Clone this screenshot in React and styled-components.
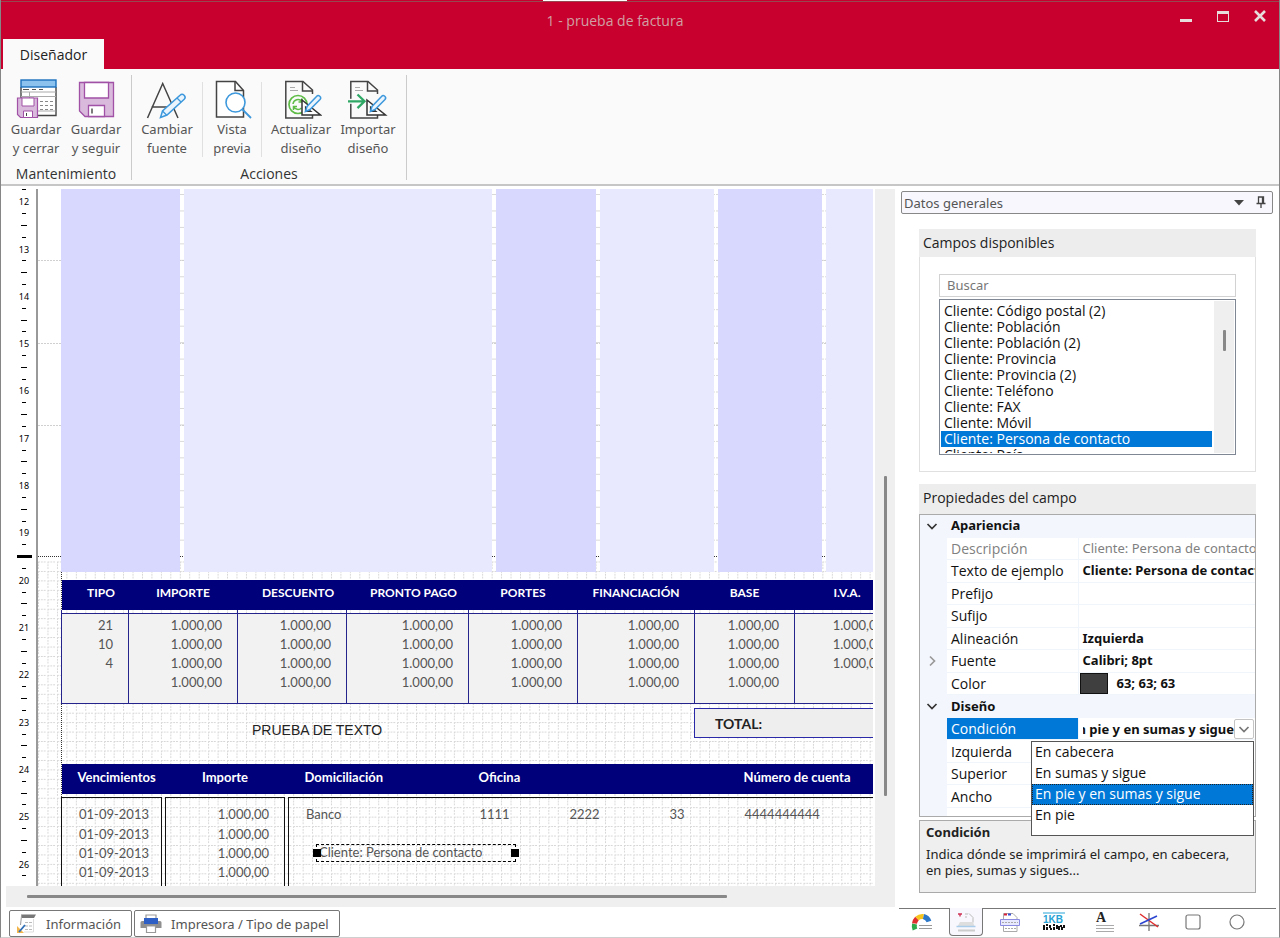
import styled, { createGlobalStyle, css } from "styled-components";

const GlobalStyle = createGlobalStyle`
  * {
    box-sizing: border-box;
  }

  body {
    margin: 0;
    background: #fff;
    font-family: "Noto Sans", "Open Sans", sans-serif;
    font-size: 13px;
    color: #222;
  }

  button,
  input,
  select {
    font: inherit;
    color: inherit;
  }

  button {
    padding: 0;
    border: none;
    background: none;
  }
`;

const panelText = css`
  font-family: "Open Sans", "Noto Sans", sans-serif;
  font-size: 14px;
`;

const Window = styled.div`
  display: flex;
  flex-direction: column;
  height: 100vh;
  overflow: hidden;
  border: 1px solid #868686;
  border-top: none;
  border-bottom-color: #cfcfcf;
`;

/* ---------- title bar ---------- */

const TopStrip = styled.div`
  display: flex;
  justify-content: center;
  flex: none;
  height: 2px;
  padding-right: 110px;
  background: #c8002d;
  border-bottom: 1px solid #96474f;
`;

const StripMark = styled.span`
  width: 84px;
  background: #fff;
`;

const TitleBar = styled.header`
  display: grid;
  grid-template-columns: 1fr auto 1fr;
  flex: none;
  height: 37px;
  background: #c8002d;
`;

const Title = styled.h1`
  grid-column: 2;
  margin: 0;
  padding-right: 50px;
  ${panelText}
  font-weight: 400;
  line-height: 37px;
  color: #d0a0a4;
`;

const WindowButtons = styled.div`
  display: flex;
  justify-content: flex-end;
  gap: 13px;
  padding: 3px 7px 0 0;
`;

const WindowButton = styled.button`
  width: 24px;
  height: 24px;

  svg {
    display: block;
  }
`;

const TabStrip = styled.nav`
  display: flex;
  flex: none;
  height: 30px;
  padding-left: 2px;
  background: #c8002d;
`;

const RibbonTab = styled.button`
  width: 101px;
  padding-top: 1px;
  background: #fafafa;
  ${panelText}
  color: #222;
`;

/* ---------- ribbon ---------- */

const Ribbon = styled.div`
  display: flex;
  flex: none;
  height: 117px;
  padding: 6px 0 4px;
  background: #fafafa;
  border-bottom: 2px solid #c6c6c6;
`;

const RibbonGroup = styled.section`
  display: flex;
  flex-direction: column;
  justify-content: space-between;
  padding: 0 5px;
  border-right: 1px solid #cbcbcb;
`;

const RibbonItems = styled.div`
  display: flex;
`;

const RibbonButton = styled.button`
  display: flex;
  flex-direction: column;
  align-items: center;
  width: ${(props) => props.$width};
  padding-top: 3px;
  line-height: 19px;
  color: #555;

  svg {
    flex: none;
  }
`;

const RibbonDivider = styled.span`
  width: 1px;
  height: 75px;
  margin: 7px 5px 0;
  background: #e0e0e0;
`;

const GroupName = styled.h2`
  margin: 0;
  ${panelText}
  font-weight: 400;
  line-height: 12px;
  text-align: center;
  color: #333;
`;

/* ---------- workspace ---------- */

const Workspace = styled.div`
  display: flex;
  flex: 1;
  min-height: 0;
  padding-top: 3px;
`;

const DesignArea = styled.main`
  display: flex;
  flex-direction: column;
  flex: 1;
  min-width: 0;
`;

const CanvasRow = styled.div`
  display: flex;
  flex: 1;
  min-height: 0;
`;

const Ruler = styled.ol`
  display: flex;
  flex-direction: column;
  flex: none;
  width: 35px;
  height: 698px;
  margin: -5px 0 0;
  padding: 0 0 0 11px;
  list-style: none;
`;

const RulerMark = styled.li`
  display: flex;
  align-items: center;
  justify-content: center;
  flex: 1;
  min-height: 0;
  width: 24px;
  font-size: 9px;
  line-height: 9px;
  color: #000;

  ${(props) =>
    props.$tick &&
    css`
      &::before {
        content: "";
        width: ${{ small: "4px", medium: "6px", page: "15px" }[props.$tick]};
        height: ${props.$tick === "page" ? "3px" : "1px"};
        background: #000;
      }
    `}
`;

const Paper = styled.div`
  position: relative;
  flex: 1;
  min-width: 0;
  overflow: hidden;
  padding-left: 23px;
  border-left: 2px solid #999;
`;

const GridLines = styled.svg`
  position: absolute;
  inset: 0;
  z-index: -1;
  width: 100%;
  height: 100%;
`;

const Bands = styled.div`
  display: flex;
  gap: 4px;
  height: 383px;
`;

const Band = styled.div`
  flex: ${(props) => (props.$width ? "none" : "1")};
  width: ${(props) => props.$width};
  background: ${(props) => (props.$dark ? "#d8d8ff" : "#e8e8ff")};
`;

const ReportTable = styled.table`
  table-layout: fixed;
  width: 838px;
  border-collapse: collapse;
  font-family: Lato, "Open Sans", sans-serif;
  font-size: 13px;
  line-height: 19px;
  color: #555;
`;

const HeadCell = styled.th`
  height: 30px;
  padding: 0 0 4px ${(props) => props.$indent || "0"};
  background: #00007b;
  color: #fff;
  font-size: ${(props) => (props.$large ? "13px" : "12px")};
  line-height: 16px;
  white-space: nowrap;
  text-align: ${(props) => props.$align || "center"};
`;

const TaxTable = styled(ReportTable)`
  margin-top: 8px;

  td {
    padding: 0 15px 0 0;
    border: 0 solid #24248c;
    border-width: 0 1px;
    background: #f2f2f2;
    text-align: right;
  }

  tbody tr:first-child td {
    height: 3px;
    background: transparent;
  }

  tbody tr:nth-child(2) td {
    height: 21px;
    padding-top: 2px;
    border-top-width: 1px;
  }

  tbody tr:last-child td {
    height: 30px;
    padding-bottom: 11px;
    border-bottom-width: 1px;
  }
`;

const TotalsRow = styled.div`
  display: flex;
  align-items: center;
  height: 30px;
  margin: 4px 0 26px;
`;

const FreeText = styled.p`
  flex: none;
  width: 633px;
  margin: 0;
  padding: 14px 0 0 191px;
  font-family: "Liberation Sans", sans-serif;
  font-size: 14px;
  line-height: 16px;
  color: #222;
`;

const TotalBox = styled.div`
  flex: 1;
  height: 30px;
  padding-left: 20px;
  border: 1px solid #2a2aa8;
  border-right: none;
  background: #eee;
  font-family: Lato, "Open Sans", sans-serif;
  font-size: 14px;
  font-weight: 700;
  line-height: 30px;
`;

const DueTable = styled(ReportTable)`
  td {
    height: 19px;
    padding: 0 0 0 17px;
    text-align: left;
    vertical-align: top;
    white-space: nowrap;
  }

  tbody tr:first-child td {
    height: 4px;
  }

  tbody tr:nth-child(2) td {
    height: 27px;
    padding-top: 7px;
  }

  tbody tr:last-child td {
    height: 40px;
  }
`;

const BoxCell = styled.td`
  border-left: 1px solid #111;
  border-right: ${(props) => (props.$open ? "none" : "1px solid #111")};

  ${(props) =>
    props.$amount &&
    css`
      && {
        padding-left: 0;
        padding-right: 15px;
        text-align: right;
      }
    `}
`;

const DueRow = styled.tr`
  ${(props) =>
    props.$first &&
    css`
      td:not(:empty),
      td[data-inner] {
        border-top: 1px solid #111;
      }
    `}
`;

/* field placed freely on the sheet */
const PlacedField = styled.div`
  position: absolute;
  left: 278px;
  top: 655px;
  display: flex;
  align-items: center;
  width: 200px;
  height: 18px;
  padding: 0 0 2px 2px;
  border: 1px dashed #000;
  font-family: Lato, "Open Sans", sans-serif;
  font-size: 13px;
  line-height: 16px;
  color: #555;
`;

const Handle = styled.span`
  position: absolute;
  ${(props) => props.$side}: -4px;
  top: 4px;
  width: 8px;
  height: 8px;
  background: #000;
`;

const ScrollTrack = styled.div`
  display: flex;
  flex: none;
  align-items: center;
  flex-direction: ${(props) => (props.$vertical ? "column" : "row")};
  width: ${(props) => (props.$vertical ? "20px" : "auto")};
  height: ${(props) => (props.$vertical ? "auto" : "21px")};
  margin-left: ${(props) => (props.$vertical ? "2px" : "5px")};
  background: #efefef;

  &::before {
    content: "";
    flex: ${(props) => props.$before};
  }

  &::after {
    content: "";
    flex: ${(props) => props.$after};
  }
`;

const ScrollThumb = styled.span`
  flex: ${(props) => props.$size};
  width: ${(props) => (props.$vertical ? "3px" : "auto")};
  height: ${(props) => (props.$vertical ? "auto" : "3px")};
  border-radius: 1px;
  background: #888;
`;

const BottomTabs = styled.nav`
  display: flex;
  flex: none;
  gap: 2px;
  height: 30px;
  padding: 3px 0 0 8px;
`;

const BottomTab = styled.button`
  display: flex;
  align-items: center;
  gap: 9px;
  height: 27px;
  padding: 0 10px 0 5px;
  border: 1px solid #777;
  border-radius: 2px;
  background: #fff;
  color: #555;
`;

/* ---------- side panel ---------- */

const Side = styled.aside`
  display: flex;
  flex-direction: column;
  flex: none;
  width: 384px;
  padding: 2px 3px 0 4px;
`;

const SideHeader = styled.div`
  display: flex;
  align-items: center;
  height: 23px;
  margin: 0 3px 15px 2px;
  padding-left: 2px;
  border: 1px solid #888;
  border-radius: 2px;
  background: #f7f7fd;
  color: #555;

  h2 {
    flex: 1;
    margin: 0;
    font-size: 13px;
    font-weight: 400;
    line-height: 20px;
  }
`;

const SideButton = styled.button`
  display: flex;
  align-items: center;
  justify-content: center;
  width: 22px;
  height: 20px;
`;

const Card = styled.section`
  margin: 0 20px ${(props) => props.$gap || "0"} 20px;
`;

const CardTitle = styled.h3`
  margin: 0;
  height: ${(props) => props.$height};
  padding-left: 4px;
  background: #ededed;
  ${panelText}
  font-weight: 400;
  line-height: 28px;
`;

const CardBody = styled.div`
  padding: 17px 19px 16px;
  border: 1px solid #e0e0e0;
  border-top: none;
`;

const SearchInput = styled.input`
  display: block;
  width: 100%;
  height: 23px;
  margin-bottom: 2px;
  padding: 0 7px 2px;
  border: 1px solid #d2d2d2;
  outline: none;
  background: #fff;

  &::placeholder {
    color: #777;
    opacity: 1;
  }
`;

const FieldBox = styled.div`
  display: flex;
  height: 156px;
  padding: 1px;
  border: 1px solid #7f8794;
`;

const FieldList = styled.ul`
  flex: 1;
  margin: 0;
  padding: 2px 0 0;
  overflow: hidden;
  list-style: none;
  ${panelText}
`;

const FieldOption = styled.li`
  height: 16px;
  padding-left: 3px;
  line-height: 16px;
  color: ${(props) => (props.$selected ? "#fff" : "#111")};
  background: ${(props) => (props.$selected ? "#0078d7" : "none")};
`;

const PropertyBox = styled.div`
  height: 303px;
  border: 1px solid #aaa;
  background: linear-gradient(90deg, #f3f6fc 27px, #fff 27px);
`;

const PropertyTable = styled.table`
  table-layout: fixed;
  width: 100%;
  height: 293px;
  border-collapse: collapse;
  font-size: 13px;
  line-height: 21px;
  color: #111;
`;

const Gutter = styled.td`
  padding: 0;
  background: #f3f6fc;
  text-align: center;

  svg {
    display: block;
    margin: 0 auto 0 6px;
  }
`;

const GroupCell = styled.th`
  padding: 0 0 0 4px;
  background: #f3f6fc;
  border-bottom: 1px solid #f3f6fc;
  text-align: left;
`;

const NameCell = styled.th`
  padding: 0 0 0 4px;
  border-bottom: 1px solid #f0f4fb;
  ${panelText}
  font-weight: 400;
  text-align: left;
  white-space: nowrap;
  color: ${(props) => (props.$active ? "#fff" : props.$muted ? "#808080" : "#111")};
  background: ${(props) => (props.$active ? "#0078d7" : "none")};
`;

const ValueCell = styled.td`
  padding: 0 0 0 4px;
  border-left: 1px solid #f0f4fb;
  border-bottom: 1px solid #f0f4fb;
  overflow: ${(props) => (props.$open ? "visible" : "hidden")};
  font-weight: ${(props) => (props.$muted ? 400 : 700)};
  white-space: nowrap;
  color: ${(props) => (props.$muted ? "#808080" : "#111")};
`;

const ColorValue = styled.span`
  display: flex;
  align-items: center;
  gap: 9px;
  margin-left: -3px;

  &::before {
    content: "";
    width: 26px;
    height: 19px;
    border: 1px solid #111;
    background: #3f3f3f;
  }
`;

const Combo = styled.div`
  position: relative;
  display: flex;
  align-items: center;
  height: 21px;
`;

const ComboSelect = styled.select`
  flex: 1;
  min-width: 0;
  height: 20px;
  padding: 0;
  border: none;
  outline: none;
  appearance: none;
  background: none;
  direction: rtl;
`;

const ComboArrow = styled.button`
  display: flex;
  align-items: center;
  justify-content: center;
  flex: none;
  width: 20px;
  height: 20px;
  margin-right: 1px;
  border: 1px solid #c4c4c4;
  border-radius: 2px;
  background: #fff;
`;

const ComboMenu = styled.ul`
  position: absolute;
  z-index: 2;
  top: 100%;
  right: 1px;
  width: 223px;
  height: 95px;
  margin: 2px 0 0;
  padding: 0;
  border: 1px solid #555;
  background: #fff;
  ${panelText}
  font-weight: 400;
  list-style: none;
`;

const ComboOption = styled.li`
  height: 21px;
  padding-left: 3px;
  line-height: 20px;
  color: ${(props) => (props.$selected ? "#fff" : "#111")};
  background: ${(props) => (props.$selected ? "#0078d7" : "none")};
  outline: ${(props) => (props.$selected ? "1px dotted #222" : "none")};
  outline-offset: -1px;
`;

const HelpBox = styled.section`
  height: 73px;
  margin: 3px 20px 0 20px;
  padding: 2px 6px;
  border: 1px solid #aaa;
  background: #efefef;

  h4,
  p {
    margin: 0;
    font-size: 13px;
    line-height: 16px;
  }

  h4 {
    margin-bottom: 5px;
    line-height: 18px;
  }

  p {
    padding-right: 10px;
  }
`;

const ToolTabs = styled.nav`
  display: flex;
  gap: 10px;
  height: 29px;
  margin-top: auto;
  padding-left: 6px;
  border-top: 1px solid #777;
`;

const ToolTab = styled.button`
  display: flex;
  align-items: center;
  justify-content: center;
  width: 34px;
  height: 28px;
  margin: -1px 0 0 ${(props) => props.$indent || "0"};

  ${(props) =>
    props.$active &&
    css`
      border: 1px solid #777;
      border-top: none;
      border-radius: 0 0 4px 4px;
      background: #f7f7fd;
    `}
`;

/* ---------- icons ---------- */

const RibbonSvg = ({ children }) => (
  <svg width="42" height="42" viewBox="0 0 42 42" fill="none" aria-hidden="true">
    {children}
  </svg>
);

const SaveCloseIcon = () => (
  <RibbonSvg>
    <path d="M6 9V37.5H41V9" fill="#fff" stroke="#444" strokeWidth="1.4" />
    <path d="M6 14h35M6 18.5h35M14.5 14v10M14.5 33h26" stroke="#aaa" />
    <path d="M8 11.5h6M17 11.5h4M24 11.5h4" stroke="#555" />
    <path d="M25 23.5h14M25 27.5h14M25 31.5h14" stroke="#888" strokeDasharray="3 2" />
    <rect x="6" y="2" width="35" height="7" fill="#8cc3ee" stroke="#1c70bd" strokeWidth="1.4" />
    <path d="M2.5 20h20v19.5h-17l-3-3z" fill="#d9b9dc" stroke="#a152a6" strokeWidth="1.2" />
    <path d="M7 20h12v8H7z" fill="#fff" stroke="#a152a6" />
    <path d="M8.5 33h9v6.5h-9z" fill="#fff" stroke="#a152a6" />
    <path d="M11.5 35v3" stroke="#444" />
  </RibbonSvg>
);

const SaveIcon = () => (
  <RibbonSvg>
    <path d="M4.5 4.5h34v34H10l-5.5-5.5z" fill="#d9b9dc" stroke="#a152a6" strokeWidth="1.3" />
    <path d="M9.5 4.5h24V20h-24z" fill="#fff" stroke="#a152a6" strokeWidth="1.3" />
    <path d="M13.5 27.5h16v11h-16z" fill="#fff" stroke="#a152a6" strokeWidth="1.3" />
    <path d="M17 30.5v5" stroke="#444" strokeWidth="1.4" />
  </RibbonSvg>
);

const FontIcon = () => (
  <RibbonSvg>
    <path d="M1.5 40L16.7 5.5 32 40M5.5 29H27" stroke="#444" strokeWidth="1.5" />
    <path
      d="M14.5 39.5l2-6.5L34 17.3a2.8 2.8 0 0 1 4.2 4L21 37z"
      fill="#e9f4fd"
      stroke="#3d98dc"
      strokeWidth="1.5"
    />
    <path d="M31 20l4 4M16.5 33l4 4" stroke="#3d98dc" strokeWidth="1.3" />
  </RibbonSvg>
);

const PreviewIcon = () => (
  <RibbonSvg>
    <path d="M5.5 3.5h19l8 9V39h-27z" fill="#fff" stroke="#444" strokeWidth="1.5" />
    <path d="M24 3.5v9h8.5" stroke="#444" strokeWidth="1.5" />
    <circle cx="24.5" cy="24.5" r="9.5" fill="#fff" stroke="#3d98dc" strokeWidth="1.6" />
    <path d="M31.5 31.5L40 40" stroke="#3d98dc" strokeWidth="1.8" />
  </RibbonSvg>
);

const SheetTools = () => (
  <>
    <path d="M32.5 16v-4l-9.5-8.5H5.8V40h26.7v-3" stroke="#444" strokeWidth="1.5" />
    <path d="M22.5 3.5V13h9.5" stroke="#444" strokeWidth="1.5" />
    <path d="M10 9.5h5M10 12.5h8" stroke="#aaa" />
  </>
);

const RulerPencil = () => (
  <>
    <path d="M22 22v15h18.5z" fill="#fff" stroke="#333" strokeWidth="1.5" />
    <path d="M25.5 29v4.5H31z" stroke="#333" strokeWidth="1.2" />
    <path
      d="M25.5 33.5l1.5-5 9.5-10a2.3 2.3 0 0 1 3.5 3l-10 10z"
      fill="#e9f4fd"
      stroke="#3d98dc"
      strokeWidth="1.5"
    />
  </>
);

const RefreshIcon = () => (
  <RibbonSvg>
    <SheetTools />
    <circle cx="18" cy="26.5" r="9" stroke="#5dbb46" strokeWidth="1.7" />
    <path
      d="M13 26a5 5 0 0 1 9-2.5M22 20.5V24h-3.5M13.5 28.5a5 5 0 0 0 8 1.5M13.5 32v-3.5H17"
      stroke="#5dbb46"
      strokeWidth="1.5"
    />
    <RulerPencil />
  </RibbonSvg>
);

const ImportIcon = () => (
  <RibbonSvg>
    <g transform="translate(-2 0)">
      <SheetTools />
      <path d="M3 23.3h16" stroke="#fafafa" strokeWidth="5" />
      <path d="M3 23.3h16M12.5 16.5l7 6.8-7 6.8" stroke="#2fa866" strokeWidth="2.3" />
      <RulerPencil />
    </g>
  </RibbonSvg>
);

const Chevron = ({ right, color = "#333", size = 12 }) => (
  <svg width={size} height={size} viewBox="0 0 12 12" fill="none" aria-hidden="true">
    <path d={right ? "M4 1.5L8.5 6 4 10.5" : "M1.5 4L6 8.5 10.5 4"} stroke={color} strokeWidth="1.7" />
  </svg>
);

const InfoIcon = () => (
  <svg width="22" height="22" viewBox="0 0 22 22" fill="none" aria-hidden="true">
    <path d="M6 1.5h15l-2 3.5H7z" fill="#777" />
    <path d="M6.5 3l-1 9" stroke="#999" />
    <path d="M18.5 6v13H9" stroke="#ddd" />
    <path d="M10 9.5h7M10 13h7M10 16.5h7" stroke="#bbb" strokeDasharray="3 1" />
    <path d="M2 13v7h7z" fill="#f3b64c" />
    <path d="M4 19l6-7" stroke="#2f6fb5" strokeWidth="1.8" />
  </svg>
);

const PrinterIcon = () => (
  <svg width="22" height="22" viewBox="0 0 22 22" fill="none" aria-hidden="true">
    <path d="M6 5V2h10v3" stroke="#999" strokeWidth="1.2" />
    <path d="M2 8h18a1.5 1.5 0 0 1 1.5 1.5V15H.5V9.500A1.5 1.5 0 0 1 2 8z" fill="#8f8f8f" />
    <path d="M4 5h14v6H4z" fill="#2d5fc4" />
    <path d="M6.5 13h9v6.5h-9z" fill="#fff" stroke="#999" strokeWidth="1.2" />
  </svg>
);

const PaletteIcon = () => (
  <svg width="22" height="20" viewBox="0 0 22 20" fill="none" aria-hidden="true">
    <path d="M4 17.5a9 9 0 0 1-.5-5.5" stroke="#2fa84c" strokeWidth="5" />
    <path d="M3.5 11.5a9 9 0 0 1 2.5-5" stroke="#e02d2d" strokeWidth="5" />
    <path d="M6 6.5a8 8 0 0 1 6.5-2" stroke="#f7c51e" strokeWidth="5" />
    <path d="M12.5 4.5a8 8 0 0 1 5.5 5" stroke="#2d78c8" strokeWidth="5" />
    <path d="M8 13.5h13M8 16.5h13" stroke="#999" />
  </svg>
);

const PageFieldIcon = () => (
  <svg width="22" height="22" viewBox="0 0 22 22" fill="none" aria-hidden="true">
    <path d="M3 3h4M5 2.5v3" stroke="#cf3355" strokeWidth="1.4" />
    <path d="M10 3h3M10 6h2M14 2.5l4 4v5" stroke="#bbb" />
    <path d="M5 11h13l1.5 4.5h-17z" fill="#dedede" />
    <path d="M1.5 15.5h19" stroke="#a9cdea" strokeWidth="1.5" />
    <path d="M3 19.5h17" stroke="#ccc" strokeWidth="2" />
  </svg>
);

const PageBandIcon = () => (
  <svg width="22" height="22" viewBox="0 0 22 22" fill="none" aria-hidden="true">
    <path d="M4.5 20.5v-18H14l4 4v14z" fill="#fff" stroke="#aaa" />
    <path d="M5 3.5h3" stroke="#d8223c" strokeWidth="2" />
    <path d="M9 3.5h3" stroke="#3a4fd0" strokeWidth="2" />
    <path d="M1.5 8.5h19v6h-19z" fill="#e8e8ff" stroke="#8a8ae0" />
    <path d="M3 11.5h16M6 17.5h11" stroke="#aaa" strokeDasharray="2 1" />
  </svg>
);

const BarcodeIcon = () => (
  <svg width="22" height="20" viewBox="0 0 22 20" fill="none" aria-hidden="true">
    <path d="M0 1h22" stroke="#29a3d5" />
    <text x="0" y="11" fontFamily="Liberation Sans, sans-serif" fontSize="10" fontWeight="700" fill="#29a3d5">
      1KB
    </text>
    <path
      d="M1 13v5M3 13h2M4 15v3M7 13v3M8 16v2M10 13h2M11 15v3M14 13v2M13 16h2M16 14v4M18 13v2M19 15v3M21 13v3"
      stroke="#111"
      strokeWidth="2"
    />
  </svg>
);

const LabelIcon = () => (
  <svg width="20" height="22" viewBox="0 0 20 22" fill="none" aria-hidden="true">
    <text x="1" y="11" fontFamily="Liberation Serif, serif" fontSize="14" fontWeight="700" fill="#222">
      A
    </text>
    <path d="M1 14.5h18M1 17.5h18M1 20.5h18" stroke="#aaa" />
  </svg>
);

const LinesIcon = () => (
  <svg width="22" height="20" viewBox="0 0 22 20" fill="none" aria-hidden="true">
    <path d="M11 1v18M1 13.5h20" stroke="#777" strokeWidth="1.3" />
    <path d="M2 2l18 13" stroke="#e02d2d" strokeWidth="1.5" />
    <path d="M2 12l17-8" stroke="#2d46d0" strokeWidth="1.5" />
  </svg>
);

const ShapeIcon = ({ round }) => (
  <svg width="16" height="16" viewBox="0 0 16 16" fill="none" aria-hidden="true">
    <rect x="1" y="1" width="14" height="14" rx={round ? 7 : 2} stroke="#777" strokeWidth="1.2" />
  </svg>
);

/* ---------- data ---------- */

const rulerMarks = [
  { tick: "small" },
  ...Array.from({ length: 15 }, (_, i) => i + 12).flatMap((unit) => [
    { label: unit },
    { tick: "small" },
    { tick: unit === 19 ? "page" : "medium" },
    { tick: "small" },
  ]),
].slice(0, 59);

const bands = [
  { width: "119px", dark: true },
  { width: "308px" },
  { width: "100px", dark: true },
  { width: "114px" },
  { width: "104px", dark: true },
  {},
];

const taxColumns = [
  { name: "TIPO", width: 67, indent: "12px" },
  { name: "IMPORTE", width: 109 },
  { name: "DESCUENTO", width: 109, indent: "12px" },
  { name: "PRONTO PAGO", width: 122, indent: "12px" },
  { name: "PORTES", width: 109 },
  { name: "FINANCIACIÓN", width: 117 },
  { name: "BASE", width: 100 },
  { name: "I.V.A.", width: 105 },
];

const amount = "1.000,00";
const taxRows = [
  ["21", ...Array(7).fill(amount)],
  ["10", ...Array(7).fill(amount)],
  ["4", ...Array(7).fill(amount)],
  ["", ...Array(6).fill(amount), ""],
];

const dueRows = [["Banco", "1111", "2222", "33", "4444444444"], [], [], []];

const fields = [
  "Código postal (2)",
  "Población",
  "Población (2)",
  "Provincia",
  "Provincia (2)",
  "Teléfono",
  "FAX",
  "Móvil",
  "Persona de contacto",
  "País",
];

const conditions = ["En cabecera", "En sumas y sigue", "En pie y en sumas y sigue", "En pie"];

const properties = [
  { group: "Apariencia" },
  { name: "Descripción", value: "Cliente: Persona de contacto", muted: true },
  { name: "Texto de ejemplo", value: "Cliente: Persona de contacto" },
  { name: "Prefijo" },
  { name: "Sufijo" },
  { name: "Alineación", value: "Izquierda" },
  { name: "Fuente", value: "Calibri; 8pt", expandable: true },
  { name: "Color", value: <ColorValue>63; 63; 63</ColorValue> },
  { group: "Diseño" },
  { name: "Condición", active: true },
  { name: "Izquierda" },
  { name: "Superior" },
  { name: "Ancho" },
];

/* ---------- parts ---------- */

const SheetGrid = () => (
  <GridLines aria-hidden="true" shapeRendering="crispEdges">
    <defs>
      <pattern id="cell" width="9.45" height="9.45" x="9.5" y="372.5" patternUnits="userSpaceOnUse">
        <path d="M0 .5h9.45M.5 0v9.45" stroke="#d6d6d6" strokeDasharray="2 1" />
      </pattern>
      <pattern id="dots" width="8" height="16.46" y="5" patternUnits="userSpaceOnUse">
        <path d="M0 .5h8" stroke="#d8d8d8" strokeDasharray="2 1" />
      </pattern>
    </defs>
    <rect x="23" y="0" width="100%" height="367" fill="url(#dots)" />
    <path d="M0 71.5h2000M0 154.5h2000M0 236.5h2000" stroke="#d0d0d0" strokeDasharray="2 1" />
    <rect y="372" width="100%" height="100%" fill="url(#cell)" />
    <path d="M0 367.5h2000M23.5 383v2000" stroke="#333" strokeDasharray="1 1" />
  </GridLines>
);

const TaxSummary = () => (
  <TaxTable>
    <colgroup>
      {taxColumns.map((col) => (
        <col key={col.name} width={col.width} />
      ))}
    </colgroup>
    <thead>
      <tr>
        {taxColumns.map((col) => (
          <HeadCell key={col.name} $indent={col.indent}>
            {col.name}
          </HeadCell>
        ))}
      </tr>
    </thead>
    <tbody>
      <tr>
        {taxColumns.map((col) => (
          <td key={col.name} />
        ))}
      </tr>
      {taxRows.map((row, i) => (
        <tr key={i}>
          {row.map((value, j) => (
            <td key={j}>{value}</td>
          ))}
        </tr>
      ))}
    </tbody>
  </TaxTable>
);

const DueDates = () => (
  <DueTable>
    <colgroup>
      {[100, 4, 119, 4, 174, 90, 100, 75, 172].map((width, i) => (
        <col key={i} width={width} />
      ))}
    </colgroup>
    <thead>
      <tr>
        <HeadCell $large $align="left" $indent="16px">
          Vencimientos
        </HeadCell>
        <HeadCell $large colSpan={3}>
          Importe
        </HeadCell>
        <HeadCell $large $align="left" $indent="16px">
          Domiciliación
        </HeadCell>
        <HeadCell $large $align="left" $indent="16px" colSpan={3}>
          Oficina
        </HeadCell>
        <HeadCell $large $align="left" $indent="16px">
          Número de cuenta
        </HeadCell>
      </tr>
    </thead>
    <tbody>
      <tr>
        <td colSpan={9} />
      </tr>
      {dueRows.map((row, i) => (
        <DueRow key={i} $first={i === 0}>
          <BoxCell>01-09-2013</BoxCell>
          <td />
          <BoxCell $amount>{amount}</BoxCell>
          <td />
          <BoxCell $open>{row[0]}</BoxCell>
          {[1, 2, 3, 4].map((j) => (
            <td key={j} data-inner>
              {row[j]}
            </td>
          ))}
        </DueRow>
      ))}
    </tbody>
  </DueTable>
);

const ConditionCombo = () => (
  <Combo>
    <ComboSelect aria-label="Condición" defaultValue={conditions[2]}>
      {conditions.map((text) => (
        <option key={text}>{text}</option>
      ))}
    </ComboSelect>
    <ComboArrow aria-label="Abrir lista">
      <Chevron color="#777" />
    </ComboArrow>
    <ComboMenu role="listbox" aria-label="Condición">
      {conditions.map((text, i) => (
        <ComboOption key={text} role="option" aria-selected={i === 2} $selected={i === 2}>
          {text}
        </ComboOption>
      ))}
    </ComboMenu>
  </Combo>
);

const PropertyRow = ({ item }) =>
  item.group ? (
    <tr>
      <Gutter>
        <Chevron />
      </Gutter>
      <GroupCell colSpan={2}>{item.group}</GroupCell>
    </tr>
  ) : (
    <tr>
      <Gutter>{item.expandable && <Chevron right color="#999" />}</Gutter>
      <NameCell scope="row" $muted={item.muted} $active={item.active}>
        {item.name}
      </NameCell>
      <ValueCell $muted={item.muted} $open={item.active}>
        {item.active ? <ConditionCombo /> : item.value}
      </ValueCell>
    </tr>
  );

const App = () => {
  return (
    <>
      <GlobalStyle />
      <Window>
        <TopStrip>
          <StripMark />
        </TopStrip>
        <TitleBar>
          <Title>1 - prueba de factura</Title>
          <WindowButtons>
            <WindowButton aria-label="Minimizar">
              <svg width="24" height="24" viewBox="0 0 24 24">
                <path d="M6 14h12v3H6z" fill="#e6dcdc" />
              </svg>
            </WindowButton>
            <WindowButton aria-label="Maximizar">
              <svg width="24" height="24" viewBox="0 0 24 24">
                <path d="M6 6h12v11H6zM7 9v7h10V9z" fill="#e6dcdc" fillRule="evenodd" />
              </svg>
            </WindowButton>
            <WindowButton aria-label="Cerrar">
              <svg width="24" height="24" viewBox="0 0 24 24">
                <path d="M7 6l10 10M17 6L7 16" stroke="#e6dcdc" strokeWidth="2.6" />
              </svg>
            </WindowButton>
          </WindowButtons>
        </TitleBar>
        <TabStrip>
          <RibbonTab>Diseñador</RibbonTab>
        </TabStrip>

        <Ribbon>
          <RibbonGroup>
            <RibbonItems>
              <RibbonButton $width="60px">
                <SaveCloseIcon />
                Guardar
                <br />y cerrar
              </RibbonButton>
              <RibbonButton $width="60px">
                <SaveIcon />
                Guardar
                <br />y seguir
              </RibbonButton>
            </RibbonItems>
            <GroupName>Mantenimiento</GroupName>
          </RibbonGroup>
          <RibbonGroup>
            <RibbonItems>
              <RibbonButton $width="60px">
                <FontIcon />
                Cambiar
                <br />
                fuente
              </RibbonButton>
              <RibbonDivider />
              <RibbonButton $width="48px">
                <PreviewIcon />
                Vista
                <br />
                previa
              </RibbonButton>
              <RibbonDivider />
              <RibbonButton $width="68px">
                <RefreshIcon />
                Actualizar
                <br />
                diseño
              </RibbonButton>
              <RibbonButton $width="66px">
                <ImportIcon />
                Importar
                <br />
                diseño
              </RibbonButton>
            </RibbonItems>
            <GroupName>Acciones</GroupName>
          </RibbonGroup>
        </Ribbon>

        <Workspace>
          <DesignArea>
            <CanvasRow>
              <Ruler>
                {rulerMarks.map((mark, i) => (
                  <RulerMark key={i} $tick={mark.tick}>
                    {mark.label}
                  </RulerMark>
                ))}
              </Ruler>
              <Paper>
                <SheetGrid />
                <Bands>
                  {bands.map((band, i) => (
                    <Band key={i} $width={band.width} $dark={band.dark} />
                  ))}
                </Bands>
                <TaxSummary />
                <TotalsRow>
                  <FreeText>PRUEBA DE TEXTO</FreeText>
                  <TotalBox>TOTAL:</TotalBox>
                </TotalsRow>
                <DueDates />
                <PlacedField>
                  <Handle $side="left" />
                  Cliente: Persona de contacto
                  <Handle $side="right" />
                </PlacedField>
              </Paper>
              <ScrollTrack $vertical $before={287} $after={90}>
                <ScrollThumb $vertical $size={320} />
              </ScrollTrack>
            </CanvasRow>
            <ScrollTrack $before={21} $after={168}>
              <ScrollThumb $size={700} />
            </ScrollTrack>
            <BottomTabs>
              <BottomTab>
                <InfoIcon />
                Información
              </BottomTab>
              <BottomTab>
                <PrinterIcon />
                Impresora / Tipo de papel
              </BottomTab>
            </BottomTabs>
          </DesignArea>

          <Side>
            <SideHeader>
              <h2>Datos generales</h2>
              <SideButton aria-label="Opciones">
                <svg width="10" height="6" viewBox="0 0 10 6" aria-hidden="true">
                  <path d="M0 0h10L5 5.5z" fill="#444" />
                </svg>
              </SideButton>
              <SideButton aria-label="Fijar panel">
                <svg width="10" height="13" viewBox="0 0 10 13" fill="none" aria-hidden="true">
                  <path d="M2.5 7.5V1h5v6.5M.5 7.5h9M5 7.5V12M6.5 1v6" stroke="#444" strokeWidth="1.3" />
                </svg>
              </SideButton>
            </SideHeader>

            <Card $gap="12px">
              <CardTitle $height="28px">Campos disponibles</CardTitle>
              <CardBody>
                <SearchInput aria-label="Buscar" placeholder="Buscar" />
                <FieldBox>
                  <FieldList role="listbox" aria-label="Campos disponibles">
                    {fields.map((field, i) => (
                      <FieldOption key={field} role="option" aria-selected={i === 8} $selected={i === 8}>
                        Cliente: {field}
                      </FieldOption>
                    ))}
                  </FieldList>
                  <ScrollTrack $vertical $before={29} $after={102}>
                    <ScrollThumb $vertical $size={21} />
                  </ScrollTrack>
                </FieldBox>
              </CardBody>
            </Card>

            <Card>
              <CardTitle $height="30px">Propiedades del campo</CardTitle>
              <PropertyBox>
                <PropertyTable>
                  <colgroup>
                    <col width="27" />
                    <col width="131" />
                    <col />
                  </colgroup>
                  <tbody>
                    {properties.map((item) => (
                      <PropertyRow key={item.group || item.name} item={item} />
                    ))}
                  </tbody>
                </PropertyTable>
              </PropertyBox>
            </Card>

            <HelpBox>
              <h4>Condición</h4>
              <p>Indica dónde se imprimirá el campo, en cabecera, en pies, sumas y sigues...</p>
            </HelpBox>

            <ToolTabs>
              <ToolTab aria-label="Colores">
                <PaletteIcon />
              </ToolTab>
              <ToolTab aria-label="Datos generales" $active>
                <PageFieldIcon />
              </ToolTab>
              <ToolTab aria-label="Detalle">
                <PageBandIcon />
              </ToolTab>
              <ToolTab aria-label="Código de barras">
                <BarcodeIcon />
              </ToolTab>
              <ToolTab aria-label="Textos" $indent="7px">
                <LabelIcon />
              </ToolTab>
              <ToolTab aria-label="Líneas">
                <LinesIcon />
              </ToolTab>
              <ToolTab aria-label="Rectángulo">
                <ShapeIcon />
              </ToolTab>
              <ToolTab aria-label="Elipse">
                <ShapeIcon round />
              </ToolTab>
            </ToolTabs>
          </Side>
        </Workspace>
      </Window>
    </>
  );
};

export default App;
